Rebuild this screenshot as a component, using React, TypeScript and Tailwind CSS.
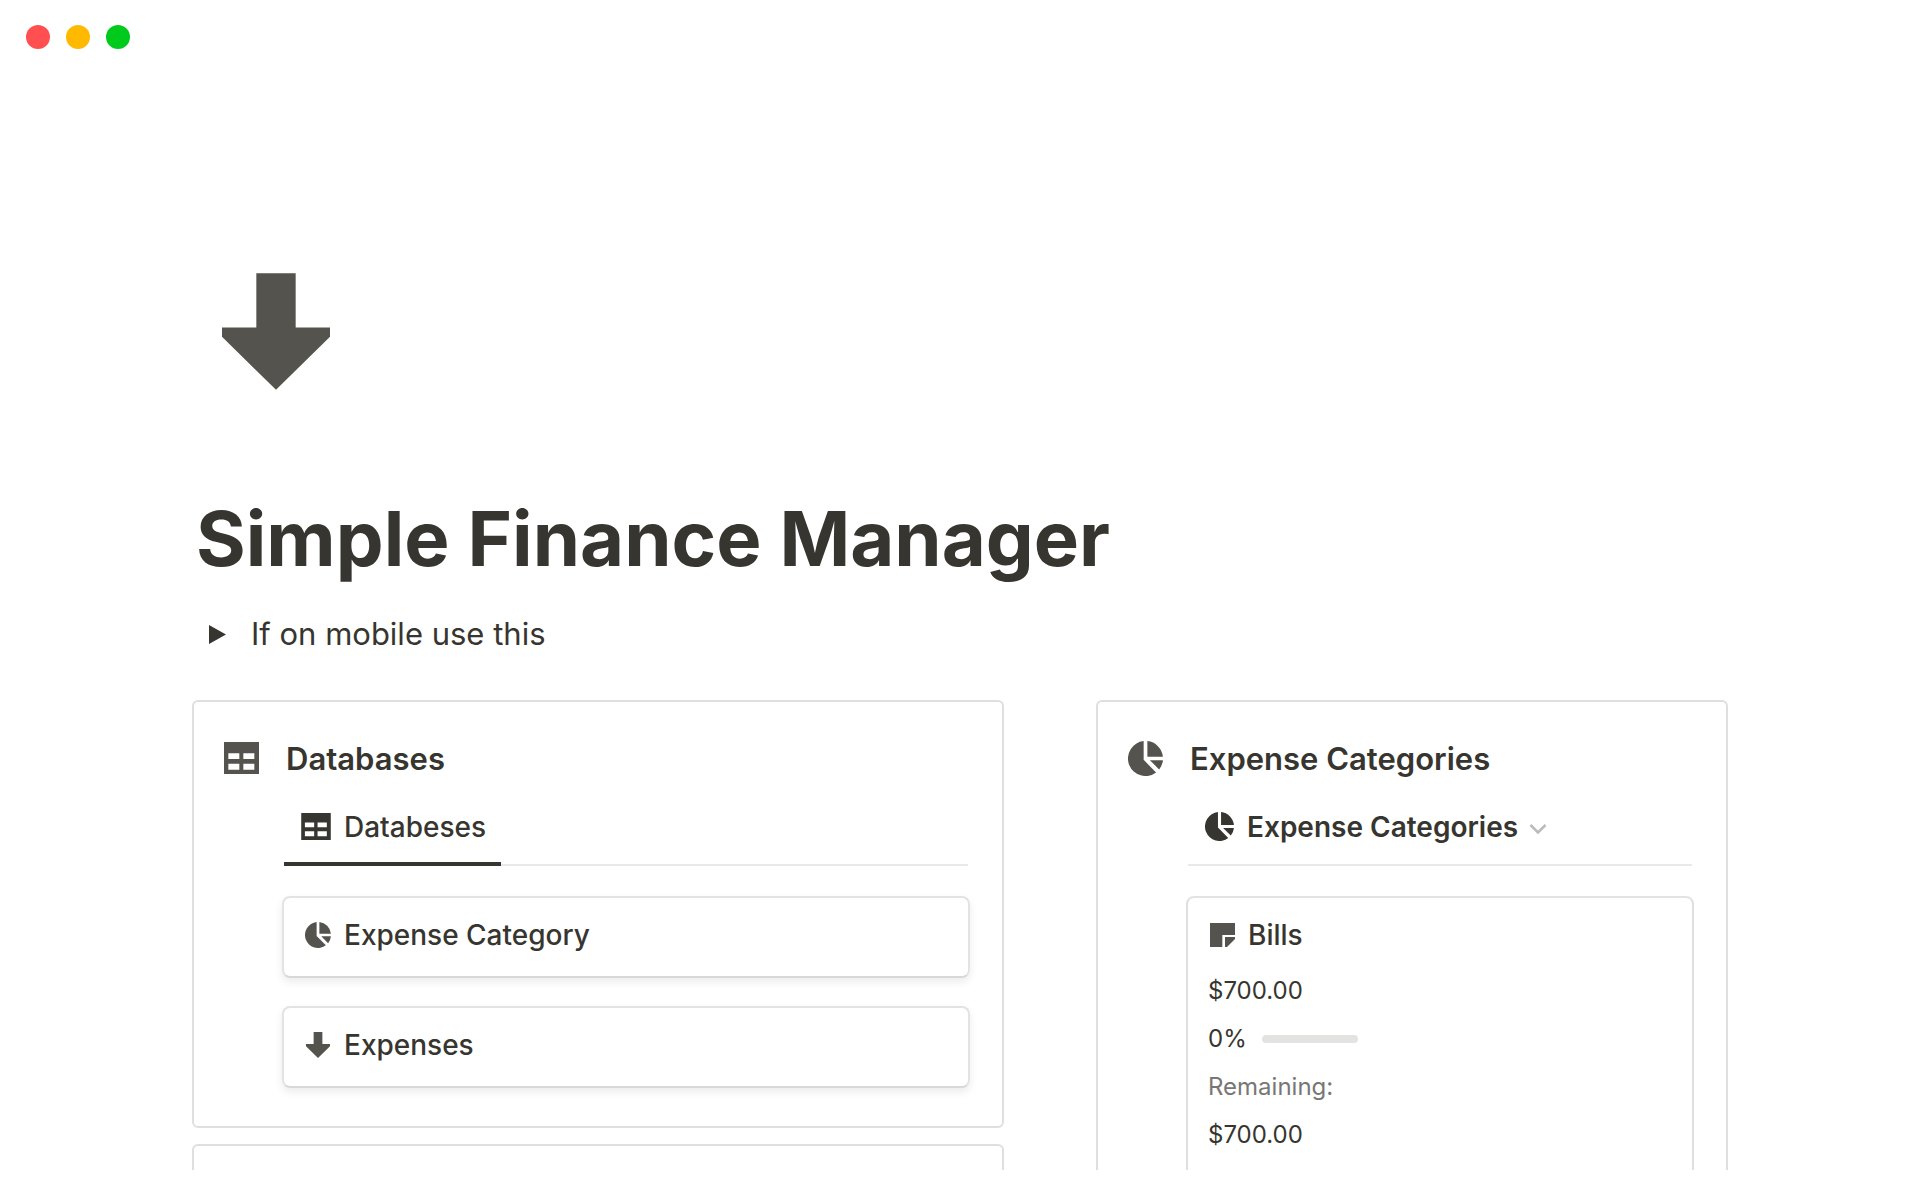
import type { ReactNode } from "react";

type IconProps = { className?: string };

function ArrowDownIcon({ className }: IconProps) {
  return (
    <svg viewBox="0 0 324 350" className={className} fill="currentColor" aria-hidden="true">
      <path d="M103 0H221V163H324V191L162 350L0 191V163H103Z" />
    </svg>
  );
}

function PieIcon({ className }: IconProps) {
  return (
    <svg viewBox="0 0 104 104" className={className} fill="currentColor" aria-hidden="true">
      <path d="M46.500 0.300V56L83.400 93.400A52 52 0 1 1 46.500 0.300Z" />
      <path d="M57.500 0.300A52 52 0 0 1 103.700 46.500H57.500Z" />
      <path d="M65 57H103.800A52 52 0 0 1 92.500 84.500Z" />
    </svg>
  );
}

function TableIcon({ className }: IconProps) {
  return (
    <svg viewBox="0 0 105 96" className={className} fill="currentColor" aria-hidden="true">
      <path
        fillRule="evenodd"
        d="M0 0H105V96H0ZM13 34V51H46V34ZM58 34V51H91V34ZM13 65V83H46V65ZM58 65V83H91V65Z"
      />
    </svg>
  );
}

function NoteIcon({ className }: IconProps) {
  return (
    <svg viewBox="0 0 75 72" className={className} fill="currentColor" aria-hidden="true">
      <path d="M0 0H75V36H37V72H0Z" />
      <path d="M45 42H75V48L51 72H45Z" />
    </svg>
  );
}

function ChevronIcon({ className }: IconProps) {
  return (
    <svg viewBox="0 0 18 12" className={className} fill="none" aria-hidden="true">
      <path d="M1.500 2L9 9.500L16.500 2" stroke="currentColor" strokeWidth="2.500" />
    </svg>
  );
}

type PanelProps = {
  icon: ReactNode;
  title: string;
  children: ReactNode;
};

function Panel({ icon, title, children }: PanelProps) {
  return (
    <section className="rounded-md border-2 border-[#dfdfde] pt-8 pr-8 pb-[38px] pl-[30px]">
      <div className="flex h-12 items-center">
        <span className="flex w-[35px] justify-center text-[#55534e]">{icon}</span>
        <h2 className="ml-[27px] pt-0.5 text-[31px] leading-12 font-semibold">{title}</h2>
      </div>
      <div className="ml-[58px]">{children}</div>
    </section>
  );
}

type RecordLinkProps = {
  icon: ReactNode;
  label: string;
};

function RecordLink({ icon, label }: RecordLinkProps) {
  return (
    <a
      href="#"
      className="flex h-[82px] items-start rounded-lg border-2 border-[#e3e3e2] border-b-[#d8d8d7] pt-[15px] pl-[21px] shadow-[0_4px_8px_rgba(15,15,15,0.08)]"
    >
      <span className="flex h-11 w-[26px] items-center justify-center text-[#55534e]">{icon}</span>
      <span className="ml-[13px] text-[28px] leading-11 font-medium">{label}</span>
    </a>
  );
}

const windowDots = ["bg-[#ff4f51]", "bg-[#ffb900]", "bg-[#00ca1b]"];

export default function App() {
  return (
    <div className="flex h-screen flex-col bg-white pb-[30px] font-['Inter',sans-serif] text-[#37352f]">
      <div className="min-h-0 flex-1 overflow-hidden">
        <header className="flex gap-4 px-[26px] pt-[25px]">
          {windowDots.map((color) => (
            <span key={color} className={`size-6 rounded-full ${color}`} />
          ))}
        </header>

        <main className="px-48 pt-56">
          <ArrowDownIcon className="ml-[30px] h-[117px] w-[108px] text-[#55534e]" />
          <h1 className="mt-[100px] pl-1 text-[76px] leading-24 font-bold">Simple Finance Manager</h1>

          <button type="button" className="mt-6 flex h-12 items-center pl-[17px]">
            <svg viewBox="0 0 17 19" className="h-[19px] w-[17px]" fill="currentColor" aria-hidden="true">
              <path d="M0 0L17 9.500L0 19Z" />
            </svg>
            <span className="ml-[25px] text-[31px] leading-12">If on mobile use this</span>
          </button>

          <div className="mt-[42px] grid grid-cols-[203fr_158fr] items-start gap-[92px]">
            <div className="flex flex-col gap-4">
              <Panel icon={<TableIcon className="h-8 w-[35px]" />} title="Databases">
                <div role="tablist" className="mx-0.5 flex h-[84px] border-b-2 border-[#e9e9e7]">
                  <button
                    type="button"
                    role="tab"
                    aria-selected="true"
                    className="-mb-0.5 flex items-start border-b-4 border-[#37352f] pt-[27px] pr-[15px] pl-[17px]"
                  >
                    <TableIcon className="mt-1 h-[27px] w-[30px]" />
                    <span className="ml-[13px] text-[28px] leading-9 font-medium">Databeses</span>
                  </button>
                </div>
                <div className="mt-[30px] flex flex-col gap-7">
                  <RecordLink icon={<PieIcon className="size-[26px]" />} label="Expense Category" />
                  <RecordLink icon={<ArrowDownIcon className="h-[26px] w-6" />} label="Expenses" />
                </div>
              </Panel>
              <section className="h-80 rounded-md border-2 border-[#dfdfde]" />
            </div>

            <Panel icon={<PieIcon className="size-[35px]" />} title="Expense Categories">
              <div className="mx-0.5 flex h-[84px] border-b-2 border-[#e9e9e7]">
                <button type="button" className="flex items-start pt-[27px] pl-[17px]">
                  <PieIcon className="mt-[3px] size-[29px]" />
                  <span className="ml-[13px] text-[28px] leading-9 font-semibold">Expense Categories</span>
                  <ChevronIcon className="mt-3.5 ml-[11px] h-3 w-[18px] text-[#bcbbb9]" />
                </button>
              </div>
              <article className="mt-[30px] h-96 rounded-lg border-2 border-[#dfdfde] border-t-[#e3e3e2] px-5 pt-[15px]">
                <div className="flex h-11 items-center">
                  <NoteIcon className="ml-0.5 h-6 w-[25px] text-[#55534e]" />
                  <h3 className="ml-[13px] text-[28px] leading-11 font-medium">Bills</h3>
                </div>
                <div className="mt-2.5 text-[24px] leading-12">
                  <p>$700.00</p>
                  <div className="flex items-center">
                    <span>0%</span>
                    <span className="ml-[15px] h-2 w-24 rounded-full bg-[#e3e3e1]" />
                  </div>
                  <p className="text-[#787774]">Remaining:</p>
                  <p>$700.00</p>
                </div>
              </article>
            </Panel>
          </div>
        </main>
      </div>
    </div>
  );
}
